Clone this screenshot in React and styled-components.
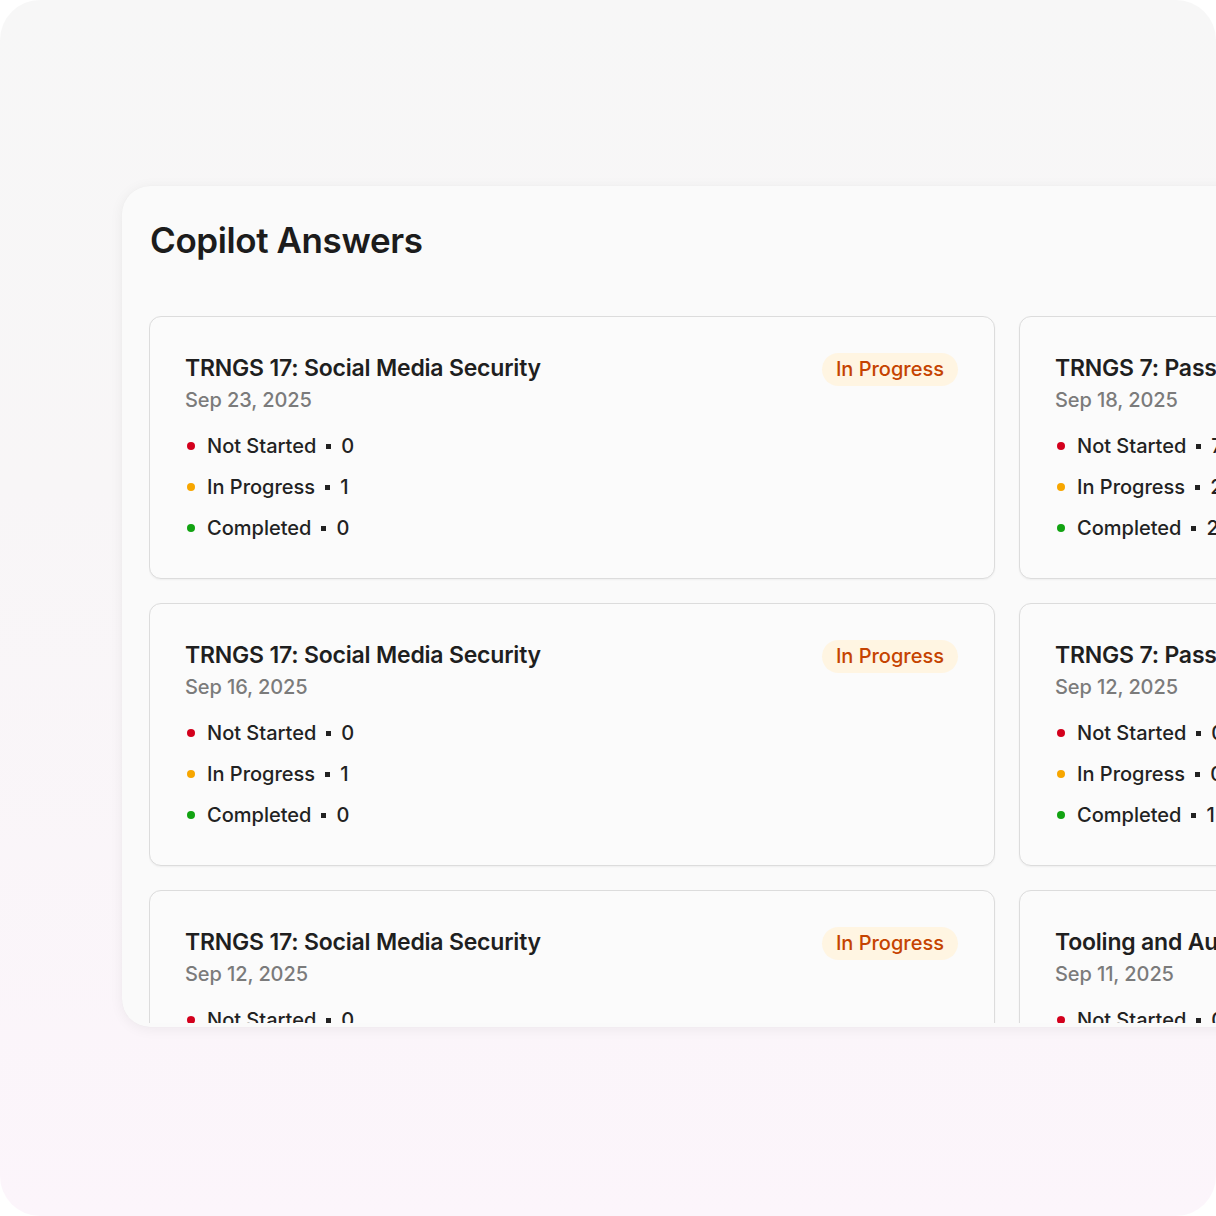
import React from 'react';
import styled, { createGlobalStyle } from 'styled-components';

const GlobalStyle = createGlobalStyle`
  html, body {
    margin: 0;
    padding: 0;
    background: #ffffff;
  }
  body {
    font-family: Inter, "Noto Sans", "Liberation Sans", sans-serif;
    -webkit-font-smoothing: antialiased;
  }
`;

const Frame = styled.div`
  width: 1216px;
  height: 1216px;
  border-radius: 40px;
  overflow: hidden;
  background: linear-gradient(180deg, #f7f7f7 0%, #f8f6f7 40%, #fcf5fb 100%);
  padding: 186px 0 0 122px;
  box-sizing: border-box;
`;

const Panel = styled.section`
  width: 1800px;
  height: 841px;
  box-sizing: border-box;
  background: #fafafa;
  border-radius: 28px;
  box-shadow: 0 2px 14px rgba(0, 0, 0, 0.06), 0 0 1px rgba(0, 0, 0, 0.05);
  padding: 30px 0 4px 27px;
  display: flex;
  flex-direction: column;
`;

const Title = styled.h1`
  margin: 0 0 52px 1px;
  font-size: 35px;
  line-height: 48px;
  font-weight: 600;
  letter-spacing: -0.4px;
  color: #1c1c1c;
`;

const Grid = styled.div`
  flex: 1;
  overflow: hidden;
  display: grid;
  grid-template-columns: 846px 846px;
  grid-auto-rows: 263px;
  gap: 24px;
  align-content: start;
`;

const Card = styled.article`
  box-sizing: border-box;
  background: #fbfbfb;
  border: 1px solid #dcdcdc;
  border-radius: 12px;
  box-shadow: 0 1px 2px rgba(0, 0, 0, 0.05);
  padding: 34px 36px 0 35px;
`;

const CardHead = styled.div`
  display: flex;
  justify-content: space-between;
  align-items: flex-start;
`;

const CardTitle = styled.h2`
  margin: 0;
  font-size: 23px;
  line-height: 34px;
  font-weight: 600;
  letter-spacing: -0.2px;
  color: #1f1f1f;
  white-space: nowrap;
`;

const DateText = styled.div`
  font-size: 20px;
  line-height: 30px;
  font-weight: 500;
  color: #7b7b7b;
  letter-spacing: -0.1px;
`;

const Badge = styled.span`
  flex-shrink: 0;
  background: #fff5e2;
  color: #c54300;
  font-size: 20px;
  line-height: 33px;
  font-weight: 500;
  padding: 0 14px;
  border-radius: 17px;
  margin-top: 2px;
`;

const StatusList = styled.ul`
  list-style: none;
  margin: 16px 0 0;
  padding: 0;
  display: flex;
  flex-direction: column;
  gap: 11px;
`;

const StatusRow = styled.li`
  display: flex;
  align-items: center;
  font-size: 20px;
  line-height: 30px;
  font-weight: 500;
  color: #222;
  white-space: nowrap;
`;

const Dot = styled.span`
  width: 8px;
  height: 8px;
  border-radius: 50%;
  background: ${p => p.$color};
  margin: 0 12px 0 2px;
  flex-shrink: 0;
`;

const Sep = styled.span`
  display: inline-block;
  width: 5px;
  height: 5px;
  background: #222;
  margin: 0 10px;
`;

const colors = {
  notStarted: '#d3001c',
  inProgress: '#f7a600',
  completed: '#12a312',
};

const cards = [
  { title: 'TRNGS 17: Social Media Security', date: 'Sep 23, 2025', counts: [0, 1, 0], badge: true },
  { title: 'TRNGS 7: Password Management Essentials', date: 'Sep 18, 2025', counts: [7, 2, 2] },
  { title: 'TRNGS 17: Social Media Security', date: 'Sep 16, 2025', counts: [0, 1, 0], badge: true },
  { title: 'TRNGS 7: Password Management Essentials', date: 'Sep 12, 2025', counts: [0, 0, 1] },
  { title: 'TRNGS 17: Social Media Security', date: 'Sep 12, 2025', counts: [0, 1, 0], badge: true },
  { title: 'Tooling and Automation Basics', date: 'Sep 11, 2025', counts: [0, 0, 0] },
];

const AnswerCard = ({ title, date, counts, badge }) => (
  <Card>
    <CardHead>
      <div>
        <CardTitle>{title}</CardTitle>
        <DateText>{date}</DateText>
      </div>
      {badge && <Badge>In Progress</Badge>}
    </CardHead>
    <StatusList>
      <StatusRow><Dot $color={colors.notStarted} />Not Started<Sep />{counts[0]}</StatusRow>
      <StatusRow><Dot $color={colors.inProgress} />In Progress<Sep />{counts[1]}</StatusRow>
      <StatusRow><Dot $color={colors.completed} />Completed<Sep />{counts[2]}</StatusRow>
    </StatusList>
  </Card>
);

export default function App() {
  return (
    <>
      <GlobalStyle />
      <Frame>
        <Panel>
          <Title>Copilot Answers</Title>
          <Grid>
            {cards.map((c, i) => (
              <AnswerCard key={i} {...c} />
            ))}
          </Grid>
        </Panel>
      </Frame>
    </>
  );
}
